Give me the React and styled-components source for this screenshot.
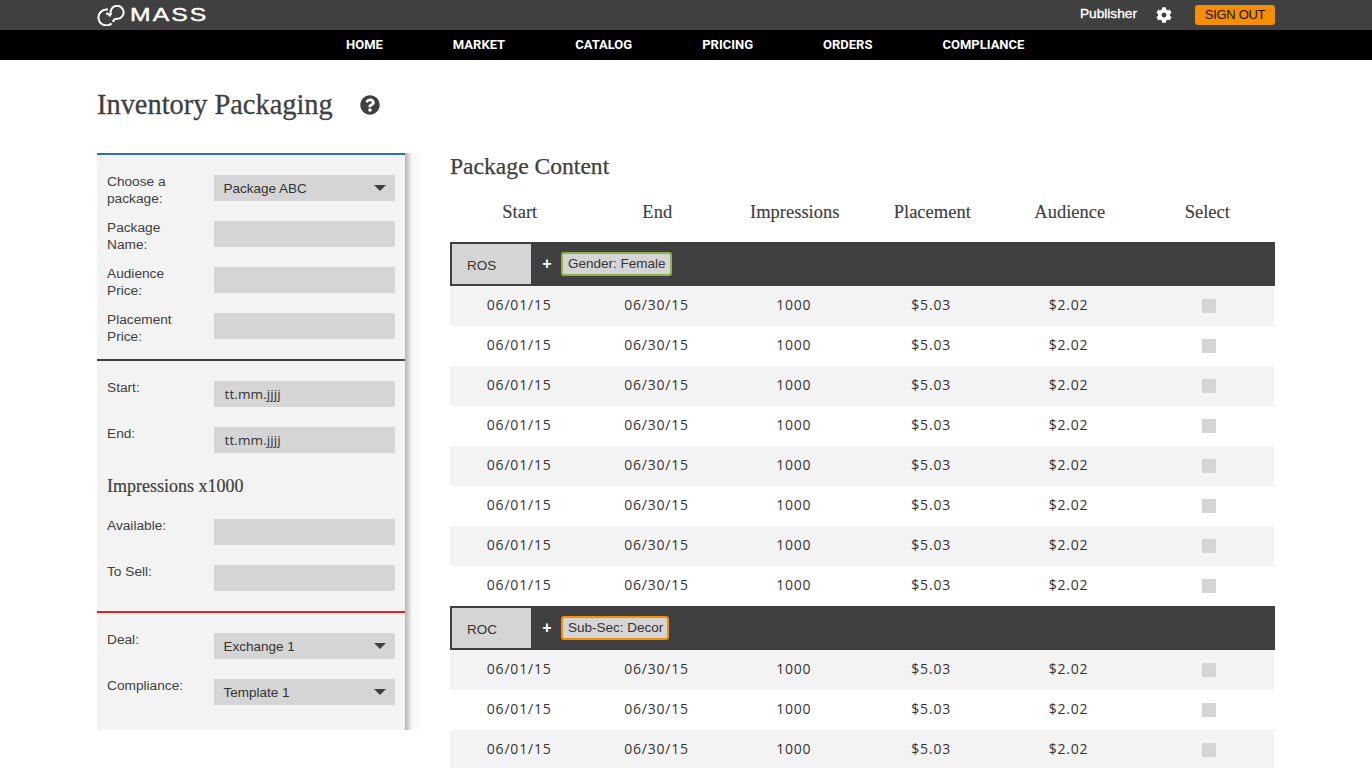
import React from "react";
import styled, { createGlobalStyle } from "styled-components";
import { FaCog, FaQuestionCircle } from "react-icons/fa";

const BODY_FONT = `"Liberation Sans", Arial, sans-serif`;
const DATA_FONT = `"Open Sans", "Liberation Sans", sans-serif`;
const SERIF_FONT = `"Liberation Serif", serif`;

const GlobalStyle = createGlobalStyle`
  html, body {
    margin: 0;
    padding: 0;
    background: #fff;
    color: #404040;
    font-family: ${BODY_FONT};
    overflow: hidden;
  }
  * { box-sizing: border-box; }
`;

const Page = styled.div`
  width: 1372px;
  height: 768px;
  overflow: hidden;
`;

const TopBar = styled.header`
  height: 30px;
  background: #404040;
  padding: 0 97px;
  display: flex;
  align-items: center;
  justify-content: space-between;
`;

const Logo = styled.div`
  display: flex;
  align-items: center;
  gap: 5px;
  color: #fff;
`;

const LogoText = styled.span`
  font-size: 19px;
  line-height: 20px;
  letter-spacing: 1.6px;
  display: inline-block;
  transform: scaleX(1.3);
  transform-origin: left center;
  -webkit-text-stroke: 0.4px #fff;
`;

const UserArea = styled.div`
  display: flex;
  align-items: center;
  color: #fff;
`;

const UserName = styled.span`
  font-size: 13.7px;
  line-height: 14px;
  margin: -2px 19px 0 0;
  -webkit-text-stroke: 0.35px #fff;
`;

const SignOut = styled.button`
  width: 80px;
  height: 20px;
  margin-left: 23px;
  padding: 0 0 2px;
  border: 0;
  border-radius: 3px;
  background: #f78e00;
  color: #140d00;
  font-family: ${BODY_FONT};
  font-size: 13px;
  letter-spacing: -0.3px;
`;

const NavBar = styled.nav`
  height: 30px;
  background: #000;
  padding: 0 0 2px 346px;
  display: flex;
  align-items: center;
  gap: 70px;
`;

const NavLink = styled.a`
  color: #fff;
  font-family: Roboto, "Liberation Sans", sans-serif;
  font-size: 13px;
  font-weight: 700;
`;

const Main = styled.main`
  padding: 0 97px;
`;

const TitleRow = styled.div`
  height: 93px;
  display: flex;
  align-items: center;
  gap: 27px;
  padding-bottom: 4px;
  color: #404040;
`;

const PageTitle = styled.h1`
  margin: 0;
  font-family: ${SERIF_FONT};
  font-size: 28.4px;
  font-weight: 400;
  color: #404040;
  -webkit-text-stroke: 0.3px #404040;
`;

const Columns = styled.div`
  display: flex;
  align-items: flex-start;
`;

const Sidebar = styled.aside`
  width: 323px;
  height: 577px;
  flex: none;
  padding-right: 15px;
  background: linear-gradient(
    to right,
    #f3f3f3 308px,
    #b4b4b4 308px,
    #d0d0d0 311px,
    #eeeeee 314px,
    #fafafa 316px
  );
`;

const Section = styled.section`
  border-top: 2px solid ${(p) => p.$accent};
  height: ${(p) => p.$height}px;
  padding: 20px 10px 0;
  display: flex;
  flex-direction: column;
  gap: 20px;
`;

const FieldRow = styled.div`
  display: grid;
  grid-template-columns: 107px 181px;
  height: 26px;
  font-size: 13.7px;
  line-height: 17px;
`;

const Label = styled.label`
  color: #404040;
  margin-top: -2px;
`;

const Box = styled.div`
  height: 26px;
  background: #d5d5d5;
  padding: 0 10px 0 9.5px;
  display: flex;
  align-items: center;
  justify-content: space-between;
  font-size: 13.5px;
  color: #333;
`;

const DateValue = styled.span`
  font-family: ${DATA_FONT};
  letter-spacing: 0.1px;
  margin-left: 1px;
`;

const Caret = styled.span`
  width: 0;
  height: 0;
  border-left: 6px solid transparent;
  border-right: 6px solid transparent;
  border-top: 6px solid #404040;
  margin-right: -1px;
`;

const SubHeading = styled.h3`
  margin: 0;
  height: 26px;
  font-family: ${SERIF_FONT};
  font-size: 18px;
  line-height: 26px;
  font-weight: 400;
  color: #404040;
  -webkit-text-stroke: 0.2px #404040;
`;

const Content = styled.div`
  width: 825px;
  margin-left: 30px;
`;

const ContentTitle = styled.h2`
  margin: 0;
  height: 36px;
  font-family: ${SERIF_FONT};
  font-size: 23.6px;
  line-height: 26px;
  font-weight: 400;
  color: #404040;
  -webkit-text-stroke: 0.25px #404040;
`;

const Row = styled.div`
  display: grid;
  grid-template-columns: repeat(6, 1fr);
  align-items: center;
  justify-items: center;
  height: 40px;
  width: 824px;
  font-family: ${DATA_FONT};
  font-size: 14px;
  letter-spacing: 0.8px;
  color: #333;
  background: ${(p) => (p.$shaded ? "#f3f3f3" : "#fff")};
`;

const Cell = styled.span`
  margin: 0 0 4px 1px;
`;

const HeadRow = styled.div`
  display: grid;
  grid-template-columns: repeat(6, 1fr);
  align-items: center;
  justify-items: center;
  height: 53px;
  width: 825px;
  padding-bottom: 6px;
  font-family: ${SERIF_FONT};
  font-size: 18.5px;
  color: #404040;
`;

const HeadCell = styled.span`
  -webkit-text-stroke: 0.15px #404040;
  margin-left: 2px;
`;

const GroupBar = styled.div`
  height: 44px;
  background: #404040;
  padding: 2px;
  display: flex;
  align-items: center;
`;

const GroupName = styled.div`
  width: 79px;
  height: 40px;
  padding: 2px 0 0 15px;
  background: #d5d5d5;
  display: flex;
  align-items: center;
  font-size: 13.5px;
  color: #333;
`;

const Plus = styled.span`
  width: 30px;
  padding-left: 2px;
  text-align: center;
  color: #fff;
  font-size: 16px;
  font-weight: 700;
`;

const Tag = styled.span`
  height: 24px;
  padding: 0 4px 2px 5px;
  border: 2px solid ${(p) => p.$color};
  border-radius: 3px;
  background: #d5d5d5;
  display: flex;
  align-items: center;
  font-size: 13.5px;
  color: #333;
`;

const Check = styled.span`
  width: 14px;
  height: 14px;
  margin-left: 7px;
  background: #d5d5d5;
`;

const NAV_ITEMS = ["HOME", "MARKET", "CATALOG", "PRICING", "ORDERS", "COMPLIANCE"];
const COLUMNS = ["Start", "End", "Impressions", "Placement", "Audience", "Select"];

const GROUPS = [
  { name: "ROS", tag: "Gender: Female", color: "#8fb04a", rows: 8 },
  { name: "ROC", tag: "Sub-Sec: Decor", color: "#f78e00", rows: 3 },
];

const LogoMark = () => (
  <svg width="28" height="21" viewBox="0 0 28 21" fill="none" stroke="#fff" strokeWidth="2">
    <path d="M11 4.6 A8 8 0 1 0 14.6 18.6" />
    <path d="M14.2 10 A6.5 6.5 0 1 1 20 13.8 C17.5 13.8 16.4 15 16 17" />
    <path d="M9 8.4 C11.5 8.4 12.8 9.5 13 11.5" />
  </svg>
);

const Field = ({ label, children }) => (
  <FieldRow>
    <Label>{label}</Label>
    <Box>{children}</Box>
  </FieldRow>
);

const SelectField = ({ label, value }) => (
  <Field label={label}>
    {value}
    <Caret />
  </Field>
);

export default function App() {
  return (
    <Page>
      <GlobalStyle />
      <TopBar>
        <Logo>
          <LogoMark />
          <LogoText>MASS</LogoText>
        </Logo>
        <UserArea>
          <UserName>Publisher</UserName>
          <FaCog size={16} />
          <SignOut>SIGN OUT</SignOut>
        </UserArea>
      </TopBar>
      <NavBar>
        {NAV_ITEMS.map((item) => (
          <NavLink key={item}>{item}</NavLink>
        ))}
      </NavBar>
      <Main>
        <TitleRow>
          <PageTitle>Inventory Packaging</PageTitle>
          <FaQuestionCircle size={20} />
        </TitleRow>
        <Columns>
          <Sidebar>
            <Section $accent="#2f6db5" $height={206}>
              <SelectField label={<>Choose a<br />package:</>} value="Package ABC" />
              <Field label={<>Package<br />Name:</>} />
              <Field label={<>Audience<br />Price:</>} />
              <Field label={<>Placement<br />Price:</>} />
            </Section>
            <Section $accent="#404040" $height={252}>
              <Field label="Start:"><DateValue>tt.mm.jjjj</DateValue></Field>
              <Field label="End:"><DateValue>tt.mm.jjjj</DateValue></Field>
              <SubHeading>Impressions x1000</SubHeading>
              <Field label="Available:" />
              <Field label="To Sell:" />
            </Section>
            <Section $accent="#ed1c24" $height={119}>
              <SelectField label="Deal:" value="Exchange 1" />
              <SelectField label="Compliance:" value="Template 1" />
            </Section>
          </Sidebar>
          <Content>
            <ContentTitle>Package Content</ContentTitle>
            <HeadRow>
              {COLUMNS.map((col) => (
                <HeadCell key={col}>{col}</HeadCell>
              ))}
            </HeadRow>
            {GROUPS.map((group) => (
              <div key={group.name}>
                <GroupBar>
                  <GroupName>{group.name}</GroupName>
                  <Plus>+</Plus>
                  <Tag $color={group.color}>{group.tag}</Tag>
                </GroupBar>
                {Array.from({ length: group.rows }, (_, i) => (
                  <Row key={i} $shaded={i % 2 === 0}>
                    <Cell>06/01/15</Cell>
                    <Cell>06/30/15</Cell>
                    <Cell>1000</Cell>
                    <Cell>$5.03</Cell>
                    <Cell>$2.02</Cell>
                    <Check />
                  </Row>
                ))}
              </div>
            ))}
          </Content>
        </Columns>
      </Main>
    </Page>
  );
}
